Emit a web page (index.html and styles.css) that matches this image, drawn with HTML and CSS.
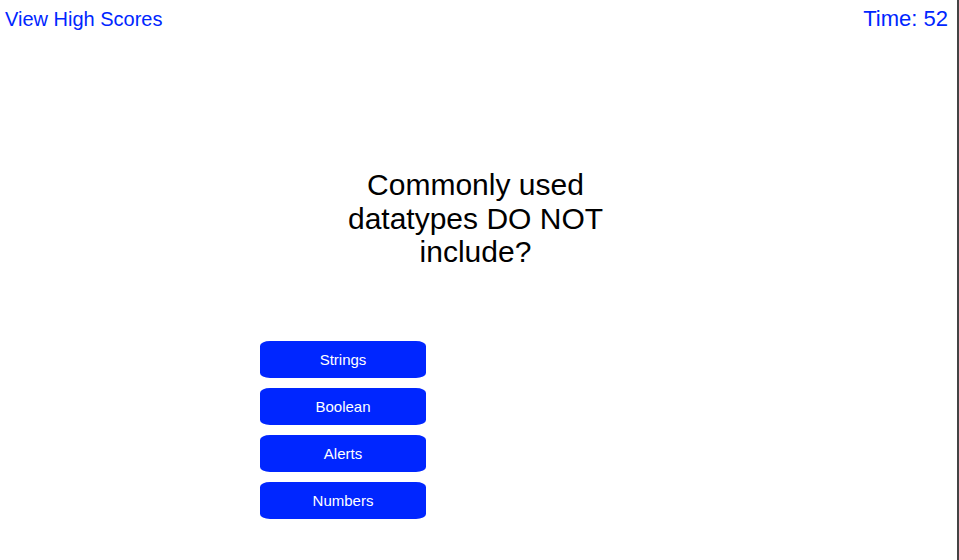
FILE: index.html
```html
<!DOCTYPE html>
<html>
<head>
<meta charset="utf-8">
<link rel="stylesheet" href="styles.css">
</head>
<body>
<header class="topbar">
  <a class="scores" href="#">View High Scores</a>
  <div class="timer">Time: 52</div>
</header>
<main class="quiz">
  <h1 class="question">Commonly used datatypes DO NOT include?</h1>
  <div class="choices">
    <button class="choice">Strings</button>
    <button class="choice">Boolean</button>
    <button class="choice">Alerts</button>
    <button class="choice">Numbers</button>
  </div>
</main>
</body>
</html>
```

FILE: styles.css
```css
html, body {
  margin: 0;
  height: 100%;
}
body {
  font-family: "Liberation Sans", Arial, sans-serif;
  background: #fff;
  border-right: 2px solid #444;
  box-sizing: border-box;
}
.topbar {
  display: flex;
  justify-content: space-between;
  align-items: center;
  padding: 6px 9px 0 5px;
  height: 26px;
  font-size: 20px;
  color: #0026ff;
}
.timer {
  font-size: 22px;
}
.scores {
  color: #0026ff;
  text-decoration: none;
}
.quiz {
  display: flex;
  flex-direction: column;
  align-items: center;
}
.question {
  width: 300px;
  margin: 136px 0 0 -6px;
  font-size: 30px;
  font-weight: normal;
  line-height: 33.5px;
  text-align: center;
  color: #000;
}
.choices {
  align-self: flex-start;
  margin: 72px 0 0 260px;
  display: flex;
  flex-direction: column;
  gap: 10px;
}
.choice {
  width: 166px;
  height: 37px;
  border: none;
  border-radius: 10px / 5px;
  background: #0026ff;
  color: #fff;
  font-family: "Liberation Sans", Arial, sans-serif;
  font-size: 15px;
  padding: 0;
}
```
